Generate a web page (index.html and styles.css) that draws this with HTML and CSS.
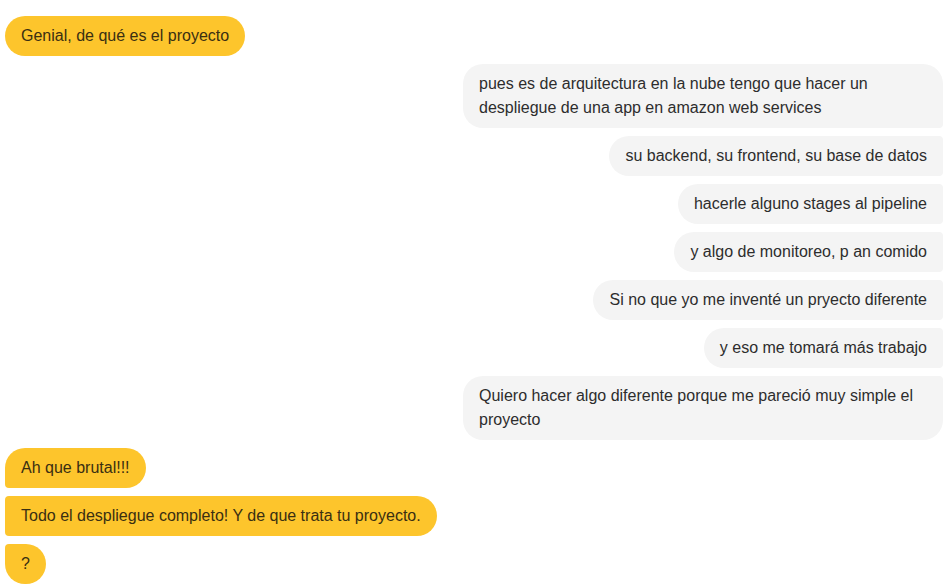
FILE: index.html
```html
<!DOCTYPE html>
<html lang="es">
<head>
    <meta charset="UTF-8">
    <meta name="viewport" content="width=device-width, initial-scale=1.0">
    <title>Chat</title>
    <link rel="stylesheet" href="styles.css">
</head>
<body>
  <div class="chat">
      <div class="msg them solo">Genial, de qué es el proyecto</div>

      <div class="msg me first">pues es de arquitectura en la nube tengo que hacer un despliegue de una app en amazon web services</div>
      <div class="msg me mid">su backend, su frontend, su base de datos</div>
      <div class="msg me mid">hacerle alguno stages al pipeline</div>
      <div class="msg me mid">y algo de monitoreo, p an comido</div>
      <div class="msg me mid">Si no que yo me inventé un pryecto diferente</div>
      <div class="msg me mid">y eso me tomará más trabajo</div>
      <div class="msg me last">Quiero hacer algo diferente porque me pareció muy simple el proyecto</div>

      <div class="msg them first">Ah que brutal!!!</div>
      <div class="msg them mid">Todo el despliegue completo! Y de que trata tu proyecto.</div>
      <div class="msg them last">?</div>
  </div>
</body>
</html>
```

FILE: styles.css
```css
body { margin: 0; background: #fff; font-family: "Liberation Sans", Arial, sans-serif; font-size: 16px; }
.chat { display: flex; flex-direction: column; gap: 8px; padding: 16px 4px 16px 5px; }
.msg { max-width: 448px; padding: 8px 16px; line-height: 24px; border-radius: 20px; }
.them { align-self: flex-start; background-color: #fdc52c; color: #3a2f12; }
.me { align-self: flex-end; background-color: #f4f4f4; color: #2d2d2d; }
.them.first { border-bottom-left-radius: 4px; }
.them.mid { border-radius: 4px 20px 20px 4px; }
.them.last { border-top-left-radius: 4px; }
.me.first { border-bottom-right-radius: 4px; }
.me.mid { border-radius: 20px 4px 4px 20px; }
.me.last { border-top-right-radius: 4px; }
```
